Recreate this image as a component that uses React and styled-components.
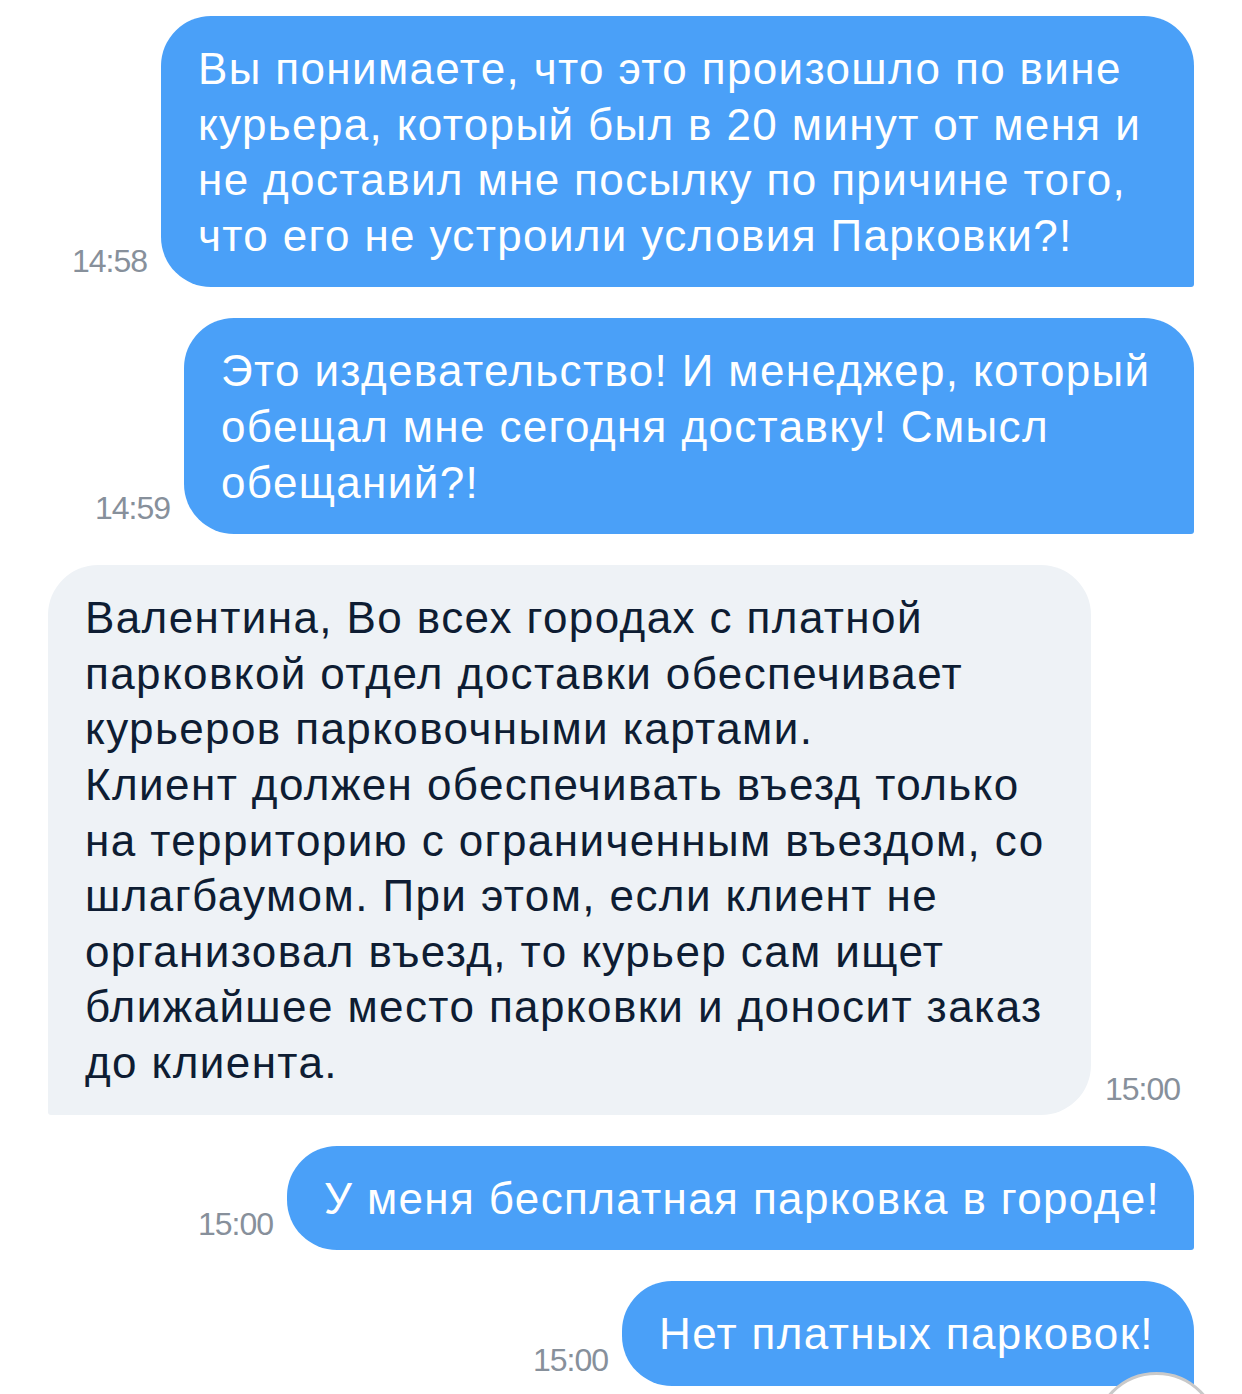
import React from 'react'
import styled, {createGlobalStyle} from 'styled-components'

const GlobalStyle = createGlobalStyle`
	html, body {
		margin: 0;
		padding: 0;
		background: #ffffff;
		overflow: hidden;
	}
	body {
		font-family: "Liberation Sans", Arial, sans-serif;
	}
`

const messages = [
	{
		out: true,
		time: '14:58',
		width: 1033,
		lines: [
			'Вы понимаете, что это произошло по вине',
			'курьера, который был в 20 минут от меня и',
			'не доставил мне посылку по причине того,',
			'что его не устроили условия Парковки?!',
		],
	},
	{
		out: true,
		time: '14:59',
		width: 1010,
		lines: [
			'Это издевательство! И менеджер, который',
			'обещал мне сегодня доставку! Смысл',
			'обещаний?!',
		],
	},
	{
		out: false,
		time: '15:00',
		width: 1043,
		lines: [
			'Валентина, Во всех городах с платной',
			'парковкой отдел доставки обеспечивает',
			'курьеров парковочными картами.',
			'Клиент должен обеспечивать въезд только',
			'на территорию с ограниченным въездом, со',
			'шлагбаумом. При этом, если клиент не',
			'организовал въезд, то курьер сам ищет',
			'ближайшее место парковки и доносит заказ',
			'до клиента.',
		],
	},
	{
		out: true,
		time: '15:00',
		width: 907,
		lines: ['У меня бесплатная парковка в городе!'],
	},
	{
		out: true,
		time: '15:00',
		width: 572,
		lines: ['Нет платных парковок!'],
	},
]

const App = () => (
	<Chat>
		<GlobalStyle />
		{messages.map((m, i) => (
			<Row key={i} out={m.out ? 1 : 0}>
				{m.out && <Time>{m.time}</Time>}
				<Bubble out={m.out ? 1 : 0} style={{width: m.width}}>
					{m.lines.map((line, j) => (
						<Line key={j}>{line}</Line>
					))}
				</Bubble>
				{!m.out && <Time>{m.time}</Time>}
			</Row>
		))}
		{/* Scroll-down button peeking from the bottom */}
		<ScrollButton />
	</Chat>
)

const Chat = styled.div`
	display: flex;
	flex-direction: column;
	gap: 31px;
	padding: 16px 48px 0;
	height: 1394px;
	box-sizing: border-box;
`

const Row = styled.div`
	display: flex;
	align-items: flex-end;
	justify-content: ${p => (p.out ? 'flex-end' : 'flex-start')};
	gap: 14px;
`

const Bubble = styled.div`
	box-sizing: border-box;
	padding: 25px 30px 24px 37px;
	background: ${p => (p.out ? '#4aa0f8' : '#eef2f6')};
	color: ${p => (p.out ? '#ffffff' : '#0e1d33')};
	border-radius: ${p => (p.out ? '50px 50px 3px 50px' : '50px 50px 50px 3px')};
	font-size: 44px;
	line-height: 55.6px;
	letter-spacing: ${p => (p.out ? '1.36px' : '1.4px')};
`

const Line = styled.div`
	white-space: nowrap;
`

const Time = styled.div`
	font-size: 32px;
	line-height: 32px;
	letter-spacing: -1px;
	color: #87909b;
	margin-bottom: 10px;
`

const ScrollButton = styled.div`
	position: fixed;
	left: 1093px;
	top: 1372px;
	width: 127px;
	height: 127px;
	box-sizing: border-box;
	border-radius: 50%;
	border: 3px solid #c9c9c9;
	background: #ffffff;
`

export default App
